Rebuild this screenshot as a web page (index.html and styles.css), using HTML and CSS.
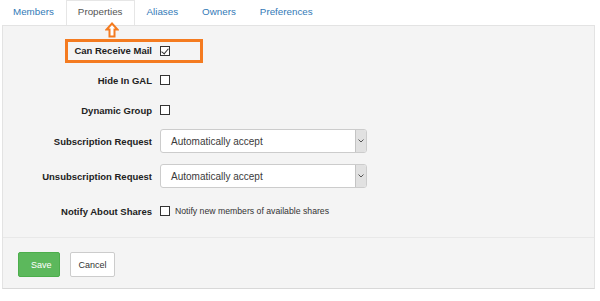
FILE: index.html
```html
<!DOCTYPE html>
<html lang="en">
<head>
    <meta charset="UTF-8">
    <title>Group - Properties</title>
    <link rel="stylesheet" href="styles.css">
</head>
<body>
    <ul class="tabs">
        <li><a href="#">Members</a></li>
        <li class="active"><a href="#">Properties</a></li>
        <li><a href="#">Aliases</a></li>
        <li><a href="#">Owners</a></li>
        <li><a href="#">Preferences</a></li>
    </ul>

    <div class="panel">
        <!-- callout pointing at the tab and the first field -->
        <svg class="callout-arrow" width="14" height="16" viewBox="0 0 14 16">
            <path d="M7 1.5 L12.5 7.5 L9.5 7.5 L9.5 14.5 L4.5 14.5 L4.5 7.5 L1.5 7.5 Z" fill="#fff" stroke="#f47b20" stroke-width="2" stroke-linejoin="miter"/>
        </svg>
        <div class="callout-box"></div>

        <div class="form">
            <div class="row r1">
                <label>Can Receive Mail</label>
                <input type="checkbox" checked>
            </div>
            <div class="row r2">
                <label>Hide In GAL</label>
                <input type="checkbox">
            </div>
            <div class="row r3">
                <label>Dynamic Group</label>
                <input type="checkbox">
            </div>
            <div class="row r4">
                <label>Subscription Request</label>
                <div class="select">
                    <span>Automatically accept</span>
                    <span class="caret">
                        <svg width="6" height="4" viewBox="0 0 6 4"><path d="M0.5 0.5 L3 3 L5.5 0.5" fill="none" stroke="#555" stroke-width="1"/></svg>
                    </span>
                </div>
            </div>
            <div class="row r5">
                <label>Unsubscription Request</label>
                <div class="select">
                    <span>Automatically accept</span>
                    <span class="caret">
                        <svg width="6" height="4" viewBox="0 0 6 4"><path d="M0.5 0.5 L3 3 L5.5 0.5" fill="none" stroke="#555" stroke-width="1"/></svg>
                    </span>
                </div>
            </div>
            <div class="row r6">
                <label>Notify About Shares</label>
                <input type="checkbox">
                <span class="hint">Notify new members of available shares</span>
            </div>
        </div>

        <div class="footer">
            <button class="btn btn-save">Save</button>
            <button class="btn btn-cancel">Cancel</button>
        </div>
    </div>
</body>
</html>
```

FILE: styles.css
```css
body {
    margin: 0;
    font-family: "Liberation Sans", Arial, sans-serif;
    color: #333;
    background-color: #fff;
}
.tabs {
    list-style: none;
    margin: 0;
    padding: 0 0 0 1px;
    display: flex;
    height: 25px;
}
.tabs li {
    border: 1px solid transparent;
    border-bottom: none;
}
.tabs a {
    display: block;
    padding: 0 11px;
    line-height: 22px;
    font-size: 9.8px;
    color: #337ab7;
    text-decoration: none;
}
.tabs li.active {
    background-color: #fff;
    border-color: #e6e6e6;
}
.tabs li.active a {
    color: #555;
}
.panel {
    position: relative;
    margin: 0 5px 0 2px;
    background-color: #f4f4f4;
    border: 1px solid #e3e3e3;
    border-bottom-color: #d8d8d8;
}
.callout-arrow {
    position: absolute;
    top: -4px;
    left: 102px;
}
.callout-box {
    position: absolute;
    top: 13px;
    left: 62px;
    width: 132px;
    height: 18px;
    border: 3px solid #f47b20;
}
.form {
    padding-top: 10px;
    padding-bottom: 10px;
}
.row {
    display: flex;
    align-items: center;
    height: 30px;
}
.row.r1 { height: 29px; }
.row.r4 { height: 32px; }
.row.r5 { height: 38px; }
.row.r6 { height: 32px; }
.row label {
    width: 149px;
    margin-right: 7px;
    text-align: right;
    font-size: 9.5px;
    font-weight: bold;
    color: #222;
}
.row input[type="checkbox"] {
    appearance: none;
    -webkit-appearance: none;
    position: relative;
    width: 10px;
    height: 10px;
    margin: 0 0 0 1px;
    border: 1px solid #333;
    background-color: #fff;
}
.row input[type="checkbox"]:checked::after {
    content: "";
    position: absolute;
    left: 2px;
    top: 0px;
    width: 3px;
    height: 6px;
    border: solid #333;
    border-width: 0 1px 1px 0;
    transform: rotate(40deg);
}
.hint {
    margin-left: 5px;
    font-size: 8.7px;
    color: #333;
}
.select {
    display: flex;
    align-items: center;
    width: 205px;
    height: 22px;
    margin-left: 1px;
    background-color: #fff;
    border: 1px solid #ccc;
    border-radius: 3px;
    font-size: 10px;
    color: #3a3a3a;
    overflow: hidden;
}
.select span:first-child {
    flex: 1;
    padding-left: 10px;
}
.select .caret {
    display: flex;
    align-items: center;
    justify-content: center;
    width: 10px;
    height: 100%;
    background-color: #e1e1e1;
    border-left: 1px solid #c4c4c4;
}
.footer {
    border-top: 1px solid #e8e8e8;
    padding: 14px 15px 11px;
    display: flex;
    gap: 10px;
}
.btn {
    height: 25px;
    padding: 0 12px;
    font-family: "Liberation Sans", Arial, sans-serif;
    font-size: 9px;
    border-radius: 2px;
    cursor: pointer;
}
.btn-save {
    width: 42px;
    background-color: #5cb85c;
    border: 1px solid #4cae4c;
    color: #fff;
}
.btn-cancel {
    width: 45px;
    padding: 0;
    background-color: #fff;
    border: 1px solid #ccc;
    color: #333;
}
```
